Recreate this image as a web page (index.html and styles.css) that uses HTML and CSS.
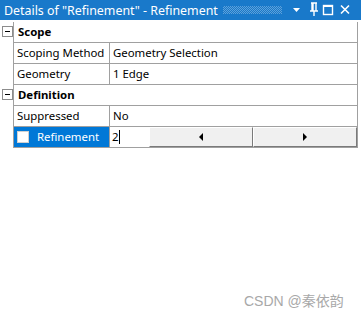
FILE: index.html
```html
<!DOCTYPE html>
<html lang="en">
<head>
  <meta charset="UTF-8">
  <title>Details of "Refinement" - Refinement</title>
  <link rel="stylesheet" href="styles.css">
</head>
<body>
  <div id="panel">
    <div class="titlebar">
      <span class="title">Details of "Refinement" - Refinement</span>
      <span class="grip"></span>
      <svg class="title-icons" width="79" height="20" viewBox="0 0 79 20">
        <!-- dropdown -->
        <polygon points="11,8 18,8 14.5,12" fill="#fff"/>
        <!-- pin -->
        <path d="M29 3h6M30 3v8M34 3v8M31 3v8M28 11h8M32 11v5" stroke="#fff" stroke-width="1.4" fill="none"/>
        <!-- maximize -->
        <rect x="41.5" y="5.5" width="9" height="9" stroke="#fff" stroke-width="1.4" fill="none"/>
        <line x1="41" y1="6" x2="51" y2="6" stroke="#fff" stroke-width="2"/>
        <!-- close -->
        <path d="M59 5.5l8 8M67 5.5l-8 8" stroke="#fff" stroke-width="1.6"/>
      </svg>
    </div>

    <div class="table">
      <div class="row">
        <div class="gutter"><span class="toggle"></span></div>
        <div class="cells head">Scope</div>
      </div>
      <div class="row">
        <div class="gutter"></div>
        <div class="cells">
          <div class="label">Scoping Method</div>
          <div class="value">Geometry Selection</div>
        </div>
      </div>
      <div class="row">
        <div class="gutter"></div>
        <div class="cells">
          <div class="label">Geometry</div>
          <div class="value">1 Edge</div>
        </div>
      </div>
      <div class="row">
        <div class="gutter"><span class="toggle"></span></div>
        <div class="cells head">Definition</div>
      </div>
      <div class="row">
        <div class="gutter"></div>
        <div class="cells">
          <div class="label">Suppressed</div>
          <div class="value">No</div>
        </div>
      </div>
      <div class="row">
        <div class="gutter"></div>
        <div class="cells">
          <div class="label selected"><span class="check"></span>Refinement</div>
          <div class="value editing">
            <div class="edit">2<span class="caret"></span></div>
            <div class="spin"><span class="arrow left"></span></div>
            <div class="spin"><span class="arrow right"></span></div>
          </div>
        </div>
      </div>
    </div>

    <div class="watermark">CSDN @秦依韵</div>
  </div>
</body>
</html>
```

FILE: styles.css
```css
body, html {
  margin: 0;
  padding: 0;
  background: #fff;
  font-family: 'Noto Sans', 'Open Sans', sans-serif;
  font-size: 11.4px;
  color: #000;
}

#panel {
  width: 361px;
  height: 318px;
  position: relative;
  overflow: hidden;
}

.titlebar {
  height: 20px;
  background-color: #1979ca;
  color: #fff;
  display: flex;
  align-items: center;
  padding-left: 4px;
  font-size: 12.4px;
  white-space: nowrap;
}

.grip {
  flex: 1;
  height: 8px;
  margin-left: 5px;
  background: repeating-conic-gradient(rgba(255, 255, 255, 0.3) 0 25%, transparent 0 50%) 0 0 / 2px 2px;
}

.title-icons {
  display: block;
  flex: none;
}

.table {
  width: 358px;
  padding-top: 2px;
}

.row {
  display: flex;
  height: 21px;
}

.gutter {
  width: 13px;
  flex: none;
  display: flex;
  align-items: center;
  padding-left: 2px;
  box-sizing: border-box;
}

.toggle {
  width: 9px;
  height: 9px;
  border: 1px solid #8c8c8c;
  position: relative;
  margin-top: -2px;
}

.toggle::after {
  content: "";
  position: absolute;
  left: 2px;
  top: 4px;
  width: 5px;
  height: 1px;
  background: #000;
}

.cells {
  flex: 1;
  display: flex;
  border-left: 1px solid #a0a0a0;
  border-right: 1px solid #a0a0a0;
  border-bottom: 1px solid #a0a0a0;
  line-height: 20px;
}

.cells.head {
  font-weight: bold;
  padding-left: 4px;
}

.label {
  width: 96px;
  flex: none;
  border-right: 1px solid #a0a0a0;
  padding-left: 3px;
  box-sizing: border-box;
  white-space: nowrap;
}

.value {
  flex: 1;
  padding-left: 3px;
}

.label.selected {
  background-color: #0078d7;
  color: #fff;
  display: flex;
  align-items: center;
}

.check {
  width: 10px;
  height: 10px;
  background: #fff;
  border: 1px solid #d0d0d0;
  margin-right: 8px;
}

.value.editing {
  padding-left: 0;
  display: flex;
}

.edit {
  width: 39px;
  padding-left: 2px;
  box-sizing: border-box;
  display: flex;
  align-items: center;
}

.caret {
  width: 1px;
  height: 14px;
  background: #000;
}

.spin {
  width: 104px;
  background-color: #f0f0f0;
  border-top: 1px solid #fff;
  border-left: 1px solid #fff;
  border-right: 1px solid #7a7a7a;
  border-bottom: 1px solid #7a7a7a;
  box-sizing: border-box;
  display: flex;
  align-items: center;
  justify-content: center;
}

.arrow {
  width: 0;
  height: 0;
  border-top: 4px solid transparent;
  border-bottom: 4px solid transparent;
}

.arrow.left {
  border-right: 4px solid #000;
}

.arrow.right {
  border-left: 4px solid #000;
}

.watermark {
  position: absolute;
  left: 244px;
  top: 290px;
  font-family: 'Liberation Sans', 'Noto Sans CJK SC', sans-serif;
  font-size: 14px;
  color: #a8a8a8;
}
```
